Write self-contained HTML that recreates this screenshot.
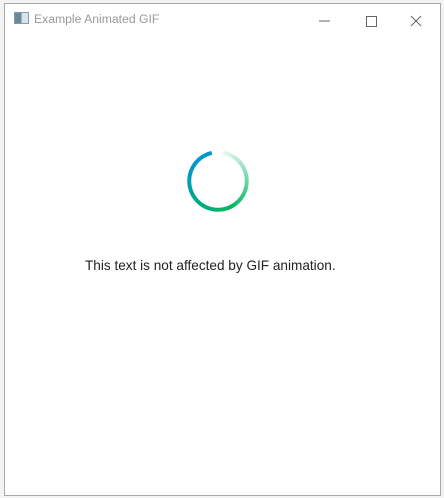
<!DOCTYPE html>
<html><head><meta charset="utf-8"><style>
html,body{margin:0;padding:0;width:444px;height:498px;background:#f3f3f3;overflow:hidden;font-family:"Liberation Sans",sans-serif}
.win{position:absolute;left:4px;top:3px;width:435px;height:491px;background:#fff;border:1px solid #a8a8a8}
.title{position:absolute;left:29px;top:8px;font-size:12.2px;color:#999}
.icon{position:absolute;left:9px;top:8px;width:13px;height:10px;border:1px solid #8a9aa8;background:linear-gradient(90deg,#6a8a9a 0 50%,#d8e4ec 50%)}
.ring{position:absolute;left:187px;top:150px;width:62px;height:62px;border-radius:50%;
background:conic-gradient(from 10deg,rgba(0,180,100,0.08),rgba(0,180,100,0.5) 70deg,#00b860 140deg,#00ad78 200deg,#0099c8 280deg,#0096cc 337deg,transparent 338deg);
-webkit-mask:radial-gradient(circle,transparent 26.5px,#000 27px,#000 30.5px,transparent 31px);
mask:radial-gradient(circle,transparent 26.5px,#000 27px,#000 30.5px,transparent 31px)}
.txt{position:absolute;left:85px;top:258px;font-size:13.6px;color:#222;white-space:nowrap}
</style></head><body>
<div class="win">
<div class="icon"></div>
<div class="title">Example Animated GIF</div>
<svg style="position:absolute;left:310px;top:6px" width="120" height="20">
<line x1="4" y1="11" x2="15" y2="11" stroke="#666" stroke-width="1"/>
<rect x="51.5" y="6.5" width="10" height="10" fill="none" stroke="#666"/>
<line x1="96" y1="6" x2="106" y2="16" stroke="#666"/><line x1="106" y1="6" x2="96" y2="16" stroke="#666"/>
</svg>
</div>
<div class="ring"></div>
<div class="txt">This text is not affected by GIF animation.</div>
</body></html>
